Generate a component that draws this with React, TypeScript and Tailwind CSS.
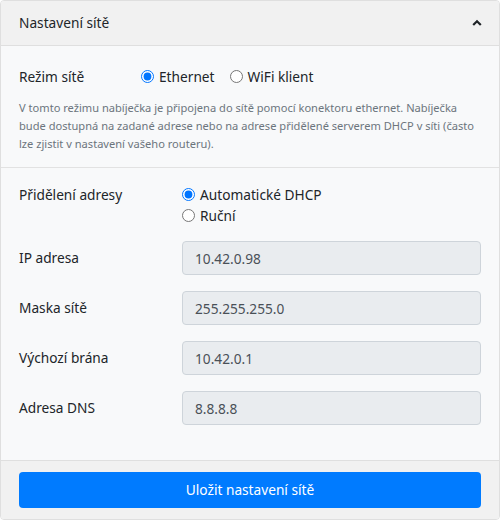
const font = { fontFamily: '"Noto Sans", "Liberation Sans", sans-serif' };

function Radio({ label, checked, name }: { label: string; checked?: boolean; name: string }) {
  return (
    <label className="flex items-center gap-[5px]">
      <input
        type="radio"
        name={name}
        defaultChecked={checked}
        className="m-0 h-[13px] w-[13px] accent-[#0075ff]"
      />
      <span>{label}</span>
    </label>
  );
}

const fields = [
  { label: "IP adresa", value: "10.42.0.98" },
  { label: "Maska sítě", value: "255.255.255.0" },
  { label: "Výchozí brána", value: "10.42.0.1" },
  { label: "Adresa DNS", value: "8.8.8.8" },
];

export default function App() {
  return (
    <div className="w-[500px] h-[520px] bg-white text-[#212529] text-[13.7px]" style={font}>
      <div className="w-[500px] h-[520px] flex flex-col border border-[#dfdfdf] rounded-[4px] overflow-hidden bg-[#f8f9fa]">
        {/* Header */}
        <div className="h-[45px] shrink-0 flex items-center justify-between pl-[18px] pr-[17px] bg-[#f1f1f1] border-b border-[#dfdfdf]">
          <span>Nastavení sítě</span>
          <svg width="10" height="8" viewBox="0 0 10 8">
            <polyline points="1.2,6 5,2.2 8.8,6" fill="none" stroke="#212529" strokeWidth="2.2" />
          </svg>
        </div>

        {/* Body */}
        <div className="flex-1 px-[18px] pt-[19px]">
          <div className="flex items-center h-[24px]">
            <span className="w-[122px]">Režim sítě</span>
            <div className="flex items-center gap-[15px]">
              <Radio name="mode" label="Ethernet" checked />
              <Radio name="mode" label="WiFi klient" />
            </div>
          </div>
          <p className="mt-[10px] text-[11.1px] leading-[18px] text-[#6c757d]">
            V tomto režimu nabíječka je připojena do sítě pomocí konektoru ethernet. Nabíječka bude dostupná na zadané adrese nebo na adrese přidělené serverem DHCP v síti (často lze zjistit v nastavení vašeho routeru).
          </p>
          <hr className="mt-[14px] -mx-[18px] border-t border-[#e2e2e2]" />

          <div className="flex mt-[16px] leading-[21px]">
            <span className="w-[163px] shrink-0">Přidělení adresy</span>
            <div className="flex flex-col">
              <Radio name="addr" label="Automatické DHCP" checked />
              <Radio name="addr" label="Ruční" />
            </div>
          </div>

          <div className="mt-[15px] flex flex-col gap-[16px]">
            {fields.map((f) => (
              <div key={f.label} className="flex items-center">
                <span className="w-[163px] shrink-0">{f.label}</span>
                <input
                  type="text"
                  value={f.value}
                  disabled
                  className="flex-1 h-[34px] px-[12px] rounded-[4px] border border-[#ced4da] bg-[#e9ecef] text-[#495057] outline-none"
                  style={font}
                />
              </div>
            ))}
          </div>
        </div>

        {/* Footer */}
        <div className="shrink-0 px-[18px] pt-[11px] pb-[11px] bg-[#f1f1f1] border-t border-[#dfdfdf]">
          <button className="w-full h-[36px] rounded-[4px] bg-[#007bff] text-white">Uložit nastavení sítě</button>
        </div>
      </div>
    </div>
  );
}
